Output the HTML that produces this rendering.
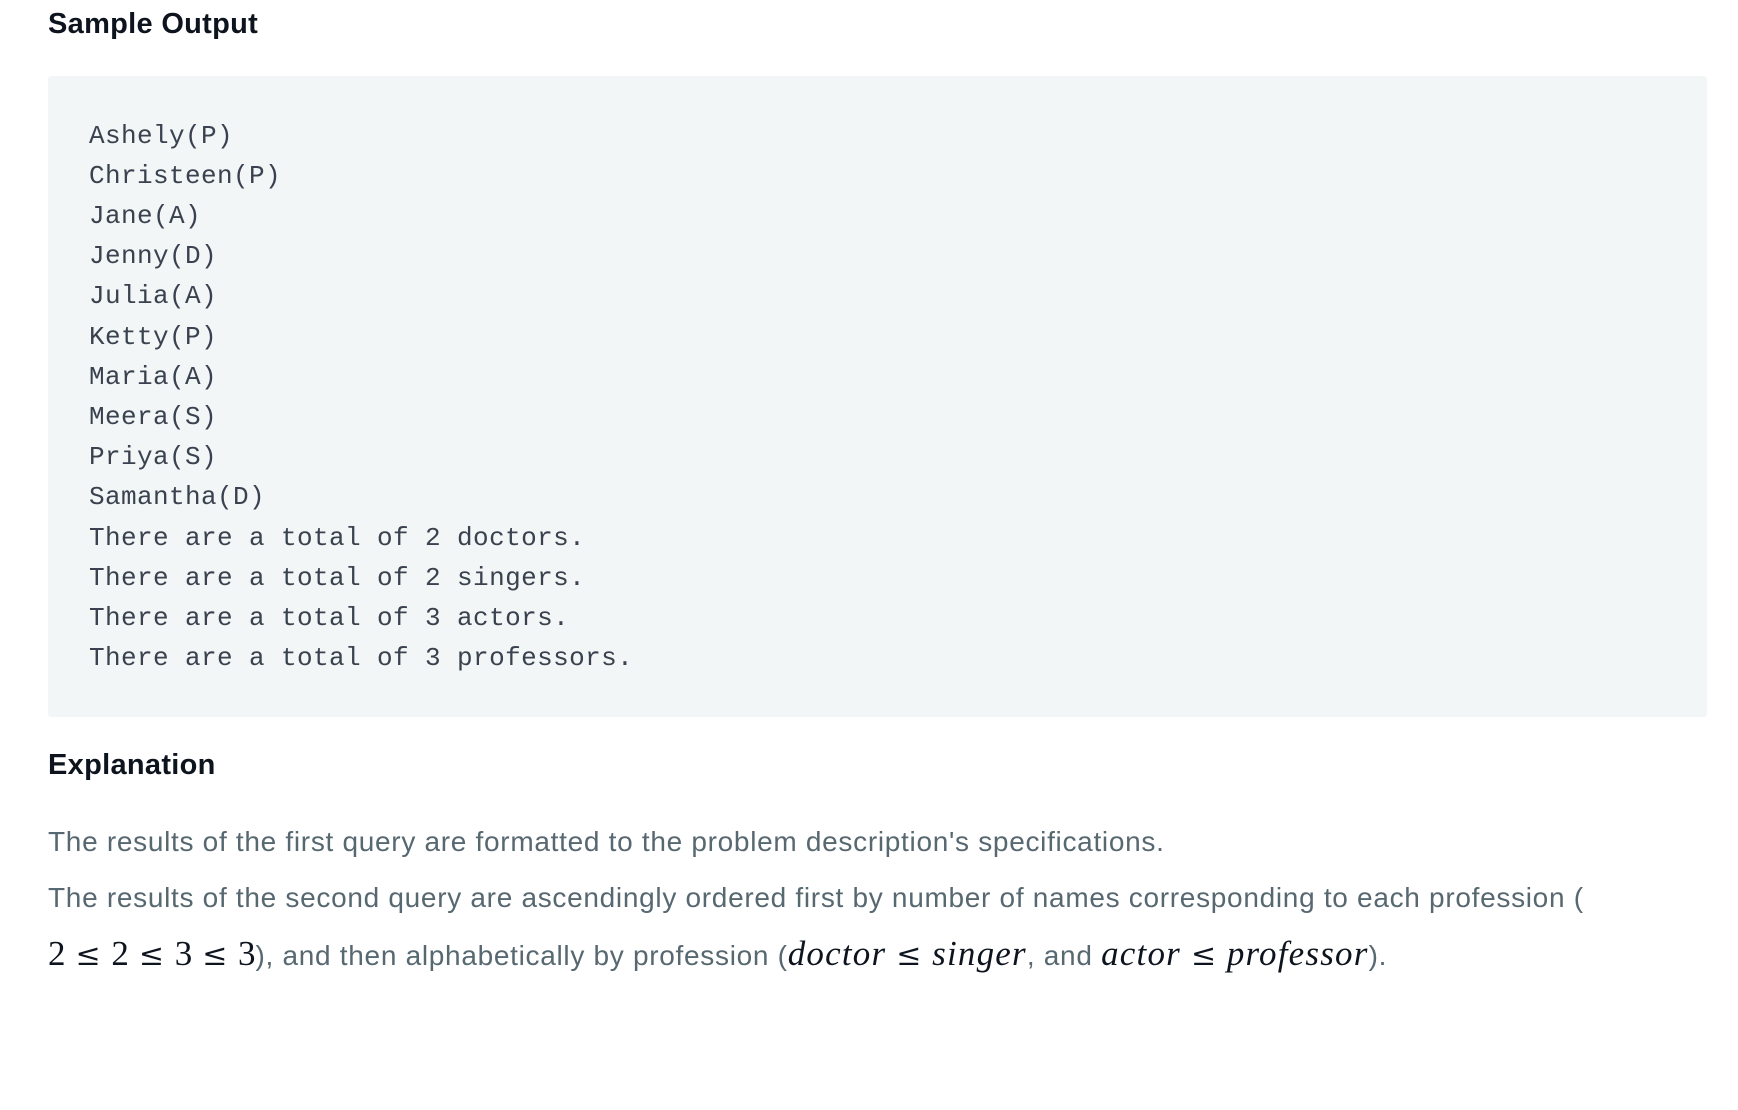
<!DOCTYPE html>
<html><head><meta charset="utf-8"><style>
body{margin:0;width:1738px;height:1110px;background:#fff;position:relative;overflow:hidden;font-family:"Liberation Sans",sans-serif}
.h{position:absolute;left:48px;font-weight:bold;font-size:29px;letter-spacing:0.3px;color:#0e141e;line-height:34px}
.code{position:absolute;left:48px;top:76px;width:1668px;height:641px;background:#f3f6f7;border-radius:3px}
.ln{position:absolute;left:89px;font-family:"Liberation Mono",monospace;font-size:26px;letter-spacing:0.4px;color:#39424e;line-height:40px;white-space:pre}
.p{position:absolute;left:48px;font-size:28px;letter-spacing:0.7px;color:#576871;line-height:40px;white-space:nowrap}
.m{font-family:"Liberation Serif",serif;font-size:35px;color:#0e141e;letter-spacing:0}
.i{font-style:italic;letter-spacing:1.2px}
.le{font-family:"DejaVu Serif",serif;font-size:30px;color:#0e141e;margin:0 10px}
</style></head><body>
<div class="h" style="top:7px">Sample Output</div>
<div class="code" style="width:1659px"></div>
<div class="ln" style="top:116px">Ashely(P)</div>
<div class="ln" style="top:156px">Christeen(P)</div>
<div class="ln" style="top:196px">Jane(A)</div>
<div class="ln" style="top:236px">Jenny(D)</div>
<div class="ln" style="top:276px">Julia(A)</div>
<div class="ln" style="top:317px">Ketty(P)</div>
<div class="ln" style="top:357px">Maria(A)</div>
<div class="ln" style="top:397px">Meera(S)</div>
<div class="ln" style="top:437px">Priya(S)</div>
<div class="ln" style="top:477px">Samantha(D)</div>
<div class="ln" style="top:518px">There are a total of 2 doctors.</div>
<div class="ln" style="top:558px">There are a total of 2 singers.</div>
<div class="ln" style="top:598px">There are a total of 3 actors.</div>
<div class="ln" style="top:638px">There are a total of 3 professors.</div>
<div class="h" style="top:748px">Explanation</div>
<div class="p" style="top:822px">The results of the first query are formatted to the problem description's specifications.</div>
<div class="p" style="top:878px">The results of the second query are ascendingly ordered first by number of names corresponding to each profession (</div>
<div class="p" style="top:934px"><span class="m">2</span><span class="le">≤</span><span class="m">2</span><span class="le">≤</span><span class="m">3</span><span class="le">≤</span><span class="m">3</span>), and then alphabetically by profession (<span class="m i">doctor</span><span class="le">≤</span><span class="m i">singer</span>, and <span class="m i">actor</span><span class="le">≤</span><span class="m i">professor</span>).</div>
</body></html>
